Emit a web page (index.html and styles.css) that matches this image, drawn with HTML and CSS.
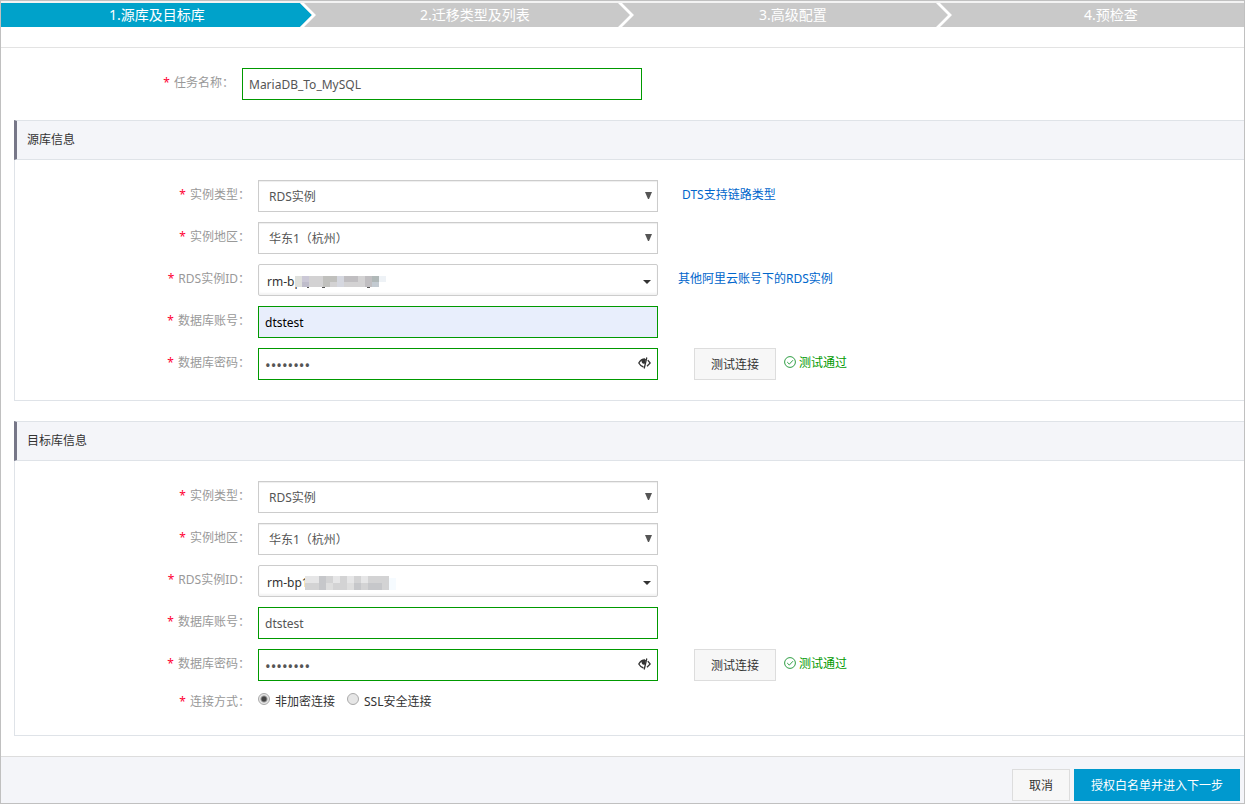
FILE: index.html
```html
<!DOCTYPE html>
<html lang="zh-CN">
<head>
<meta charset="utf-8">
<title>创建迁移任务</title>
<link rel="stylesheet" href="styles.css">
</head>
<body>
<form class="page">
  <nav class="steps">
    <ol class="step-list">
      <li class="step active"><span>1.源库及目标库</span>
        <svg class="chevron" viewBox="0 0 16 24"><path class="tail" d="M0 0L12 12L0 24Z"/><path class="edge" d="M0 0H4L16 12L4 24H0L12 12Z"/></svg></li>
      <li class="step"><span>2.迁移类型及列表</span>
        <svg class="chevron" viewBox="0 0 16 24"><path class="edge" d="M0 0H4L16 12L4 24H0L12 12Z"/></svg></li>
      <li class="step"><span>3.高级配置</span>
        <svg class="chevron" viewBox="0 0 16 24"><path class="edge" d="M0 0H4L16 12L4 24H0L12 12Z"/></svg></li>
      <li class="step"><span>4.预检查</span></li>
    </ol>
  </nav>

  <main class="content">
    <div class="row task-row">
      <label class="label" for="task">任务名称：</label>
      <input class="control" id="task" type="text" value="MariaDB_To_MySQL">
    </div>

    <section class="panel">
      <h2 class="panel-title">源库信息</h2>
      <div class="panel-body">
        <div class="row">
          <label class="label" for="src-type">实例类型：</label>
          <div class="field">
            <select class="control" id="src-type"><option>RDS实例</option></select>
            <svg class="arrow" viewBox="0 0 7 7"><path d="M0 0H7L4 7H3Z"/></svg>
          </div>
          <a class="link" href="#">DTS支持链路类型</a>
        </div>
        <div class="row">
          <label class="label" for="src-region">实例地区：</label>
          <div class="field">
            <select class="control" id="src-region"><option>华东1（杭州）</option></select>
            <svg class="arrow" viewBox="0 0 7 7"><path d="M0 0H7L4 7H3Z"/></svg>
          </div>
        </div>
        <div class="row">
          <label class="label" for="src-id">RDS实例ID：</label>
          <button class="control combo" id="src-id" type="button"><span>rm-bp</span>
            <svg class="mosaic over" viewBox="0 0 91 14"><path fill="#d3d2d3" d="M0 1H84V12H0Z"/><path fill="#dfe0dc" d="M0 1h7v11H0z"/><path fill="#cbc8d6" d="M7 1h7v6H7z"/><path fill="#bfbdcb" d="M7 7h7v5H7z"/><path fill="#c0c0bd" d="M28 1h7v11h-7zM35 1h7v6h-7z"/><path fill="#d5d7df" d="M42 1h7v11h-7z"/><path fill="#c0bec1" d="M49 1h14v6H49zM70 1h7v11h-7z"/><path fill="#b0b8b8" d="M77 1h7v6h-7z"/><path fill="#c3cad1" d="M77 7h7v5h-7z"/><path fill="#eef2f6" d="M84 1h7v6h-7z"/><path fill="#555" d="M12 12h2v1h-2zM27 12h3v1h-3zM72 12h3v1h-3z"/></svg>
            <svg class="caret" viewBox="0 0 8 4"><path d="M0 0H8L4 4Z"/></svg>
          </button>
          <a class="link near" href="#">其他阿里云账号下的RDS实例</a>
        </div>
        <div class="row">
          <label class="label" for="src-user">数据库账号：</label>
          <input class="control filled" id="src-user" type="text" value="dtstest">
        </div>
        <div class="row">
          <label class="label" for="src-pass">数据库密码：</label>
          <div class="field">
            <input class="control" id="src-pass" type="password" value="password">
            <button class="reveal" type="button" aria-label="显示密码"><svg viewBox="0 0 13 12"><path class="eye" d="M7 2C4.500 2 2 3.800.8 6C2 8.200 3.500 9.500 5.500 10"/><path class="lid" d="M3.500 4C4.500 2.500 6 2 8 2L7 6.500C5 7.500 3.500 6 3.500 4Z"/><path class="eye" d="M8.800 .5L6.200 11.500M9.800 3.200L12.200 6L9 9.200"/></svg></button>
          </div>
          <button class="btn test" type="button">测试连接</button>
          <span class="passed"><svg viewBox="0 0 12 12"><circle cx="6" cy="6" r="5.400"/><path d="M3.200 6L5.300 8.100L9 4.200"/></svg>测试通过</span>
        </div>
      </div>
    </section>

    <section class="panel">
      <h2 class="panel-title">目标库信息</h2>
      <div class="panel-body">
        <div class="row">
          <label class="label" for="dst-type">实例类型：</label>
          <div class="field">
            <select class="control" id="dst-type"><option>RDS实例</option></select>
            <svg class="arrow" viewBox="0 0 7 7"><path d="M0 0H7L4 7H3Z"/></svg>
          </div>
        </div>
        <div class="row">
          <label class="label" for="dst-region">实例地区：</label>
          <div class="field">
            <select class="control" id="dst-region"><option>华东1（杭州）</option></select>
            <svg class="arrow" viewBox="0 0 7 7"><path d="M0 0H7L4 7H3Z"/></svg>
          </div>
        </div>
        <div class="row">
          <label class="label" for="dst-id">RDS实例ID：</label>
          <button class="control combo" id="dst-id" type="button"><span>rm-bp1</span>
            <svg class="mosaic" viewBox="0 0 91 14"><path fill="#d3d3d4" d="M0 0H84V14H0Z"/><path fill="#e6e6e7" d="M0 0h14v7H0zM28 0h7v7h-7zM42 0h7v7h-7zM56 0h7v7h-7z"/><path fill="#c6c7ca" d="M14 0h7v14h-7zM49 7h7v7h-7zM63 7h14v7H63z"/><path fill="#dedede" d="M21 7h7v7h-7zM42 7h7v7h-7z"/><path fill="#f6fbff" d="M84 2h7v12h-7z"/></svg>
            <svg class="caret" viewBox="0 0 8 4"><path d="M0 0H8L4 4Z"/></svg>
          </button>
        </div>
        <div class="row">
          <label class="label" for="dst-user">数据库账号：</label>
          <input class="control" id="dst-user" type="text" value="dtstest">
        </div>
        <div class="row">
          <label class="label" for="dst-pass">数据库密码：</label>
          <div class="field">
            <input class="control" id="dst-pass" type="password" value="password">
            <button class="reveal" type="button" aria-label="显示密码"><svg viewBox="0 0 13 12"><path class="eye" d="M7 2C4.500 2 2 3.800.8 6C2 8.200 3.500 9.500 5.500 10"/><path class="lid" d="M3.500 4C4.500 2.500 6 2 8 2L7 6.500C5 7.500 3.500 6 3.500 4Z"/><path class="eye" d="M8.800 .5L6.200 11.500M9.800 3.200L12.200 6L9 9.200"/></svg></button>
          </div>
          <button class="btn test" type="button">测试连接</button>
          <span class="passed"><svg viewBox="0 0 12 12"><circle cx="6" cy="6" r="5.400"/><path d="M3.200 6L5.300 8.100L9 4.200"/></svg>测试通过</span>
        </div>
        <div class="row modes" role="radiogroup" aria-labelledby="mode-label">
          <span class="label" id="mode-label">连接方式：</span>
          <label class="option"><input type="radio" name="mode" checked>非加密连接</label>
          <label class="option"><input type="radio" name="mode">SSL安全连接</label>
        </div>
      </div>
    </section>
  </main>

  <footer class="footer">
    <button class="btn" type="button">取消</button>
    <button class="btn primary" type="submit">授权白名单并进入下一步</button>
  </footer>
</form>
</body>
</html>
```
FILE: styles.css
```css
* {
  box-sizing: border-box;
}

body {
  margin: 0;
  color: #333;
  font: 12px/20px "Noto Sans", "Noto Sans CJK SC", sans-serif;
}

input,
select,
button {
  margin: 0;
  font: inherit;
}

.page {
  display: flex;
  flex-direction: column;
  min-height: 100vh;
  border: 1px solid #c0c0c0;
  background: #fff;
}

.steps {
  overflow: hidden;
  padding-bottom: 20px;
  border-top: 2px solid #f3f3f3;
  border-bottom: 1px solid #e3e3e3;
}

.step-list {
  display: flex;
  margin: 0 -26px 0 -3px;
  padding: 0;
  list-style: none;
}

.step {
  position: relative;
  flex: 1;
  height: 24px;
  background: #c9c9c9;
  color: #fff;
  font-size: 14px;
  line-height: 24px;
  text-align: center;
}

.step.active {
  background: #00a2ca;
}

.chevron {
  position: absolute;
  top: 0;
  right: 0;
  width: 16px;
  height: 24px;
  background: #c9c9c9;
}

.edge {
  fill: #fff;
}

.tail {
  fill: #00a2ca;
}

.content {
  flex: 1;
  padding: 20px 0 20px 13px;
}

.row {
  display: flex;
  align-items: flex-start;
}

.row + .row {
  margin-top: 10px;
}

.label {
  width: 235px;
  margin-right: 8px;
  color: #999;
  line-height: 30px;
  text-align: right;
}

.task-row .label {
  width: 220px;
}

.label::before {
  content: "*";
  margin-right: 4px;
  color: #ff0033;
}

.field {
  position: relative;
}

.control {
  display: block;
  width: 400px;
  height: 32px;
  padding: 0 6px;
  border: 1px solid #090;
  border-radius: 0;
  outline: none;
  background: #fff;
  color: #555;
}

.control[type="password"] {
  padding-top: 2px;
  font-size: 15px;
}

.filled {
  background: #e8eefc;
  color: #000;
}

select.control {
  padding: 2px 6px 0 10px;
  border-color: #ccc;
  box-shadow: inset 0 1px 1px #eee;
  appearance: none;
}

.arrow {
  position: absolute;
  top: 12px;
  right: 6px;
  width: 7px;
  height: 7px;
  fill: #555;
  pointer-events: none;
}

.combo {
  display: flex;
  align-items: center;
  padding: 3px 6px 0 8px;
  border-color: #ccc;
  border-radius: 2px;
  box-shadow: inset 0 -2px 2px #f3f3f3;
  color: #333;
}

.mosaic {
  width: 91px;
  height: 14px;
  margin-left: -4px;
}

.mosaic.over {
  margin-left: -7px;
}

.caret {
  width: 8px;
  height: 4px;
  margin-left: auto;
  fill: #333;
}

.reveal {
  position: absolute;
  top: 9px;
  right: 7px;
  display: flex;
  padding: 0;
  border: 0;
  background: none;
}

.reveal svg {
  width: 13px;
  height: 12px;
}

.eye {
  fill: none;
  stroke: #333;
  stroke-width: 1.3;
}

.lid {
  fill: #333;
}

.link {
  margin-left: 24px;
  color: #06c;
  line-height: 30px;
  text-decoration: none;
}

.link.near {
  margin-left: 20px;
}

.btn {
  height: 32px;
  padding: 2px 16px 0;
  border: 1px solid #ddd;
  background: #f7f7f7;
  color: #333;
}

.test {
  margin-left: 36px;
}

.passed {
  display: flex;
  align-items: center;
  gap: 3px;
  margin-left: 8px;
  color: #090;
  line-height: 30px;
}

.passed svg {
  width: 12px;
  height: 12px;
  margin-bottom: 2px;
  fill: none;
  stroke: #2f9e44;
}

.panel {
  margin-top: 20px;
}

.panel-title {
  margin: 0;
  padding-left: 10px;
  border: solid #dfe3e8;
  border-width: 1px 0;
  border-left: 3px solid #778;
  background: #f4f5f9;
  font-size: 12px;
  font-weight: 400;
  line-height: 38px;
}

.panel-body {
  padding: 20px 0;
  border: solid #dfe3e8;
  border-width: 0 0 1px 1px;
}

.modes {
  padding-bottom: 2px;
}

.modes .label,
.option {
  line-height: 22px;
}

.option {
  display: flex;
  margin-right: 12px;
}

.option input {
  width: 12px;
  height: 12px;
  margin: 2px 5px 0 0;
  border: 1px solid #aaa;
  border-radius: 50%;
  background: #e6e6e6;
  appearance: none;
}

.option input:checked {
  background: radial-gradient(circle, #444 0 2px, #e6e6e6 4px);
}

.footer {
  display: flex;
  justify-content: flex-end;
  gap: 4px;
  padding: 12px 4px 2px;
  border-top: 1px solid #ddd;
  background: #f4f5f9;
}

.primary {
  border-color: #09c;
  background: #0099cf;
  color: #fff;
}
```
